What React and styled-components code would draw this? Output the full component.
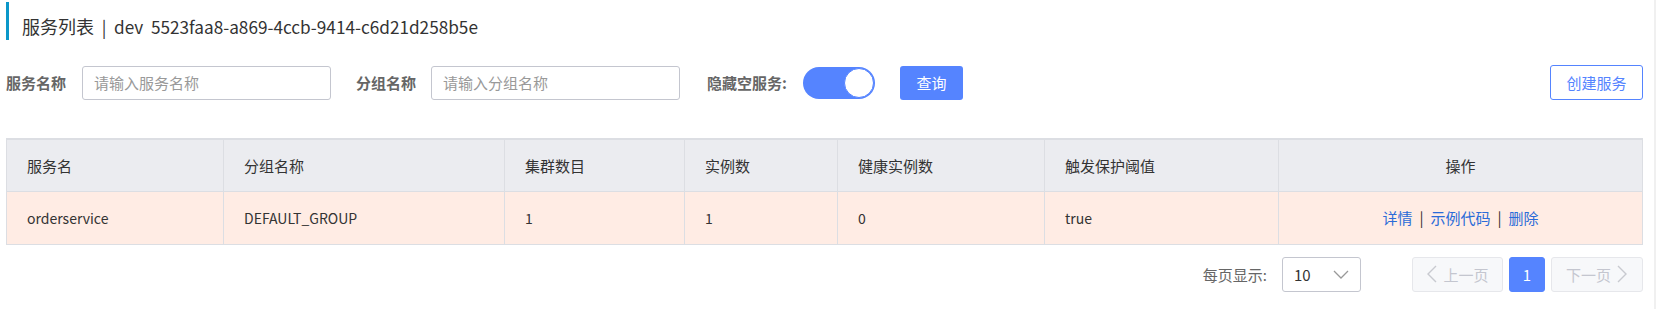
import styled, { createGlobalStyle } from 'styled-components';

const GlobalStyle = createGlobalStyle`
  html, body {
    margin: 0;
    padding: 0;
    background: #fff;
  }
  body {
    font-family: "Noto Sans CJK SC", "Liberation Sans", sans-serif;
    color: #333;
  }
  * {
    box-sizing: border-box;
  }
`;

const columns = [
  { title: '服务名', width: 217 },
  { title: '分组名称', width: 281 },
  { title: '集群数目', width: 180 },
  { title: '实例数', width: 153 },
  { title: '健康实例数', width: 207 },
  { title: '触发保护阈值', width: 234 },
  { title: '操作', width: 364, center: true },
];

const rows = [
  {
    name: 'orderservice',
    group: 'DEFAULT_GROUP',
    clusters: 1,
    instances: 1,
    healthy: 0,
    threshold: 'true',
  },
];

function ChevronDown() {
  return (
    <svg width="16" height="9" viewBox="0 0 16 9">
      <polyline points="1,1 8,8 15,1" fill="none" stroke="#999" strokeWidth="1.3" />
    </svg>
  );
}

function Chevron({ dir }) {
  const pts = dir === 'left' ? '10,1 2,9 10,17' : '1,1 9,9 1,17';
  return (
    <svg width="11" height="18" viewBox="0 0 11 18">
      <polyline points={pts} fill="none" stroke="#c8cad0" strokeWidth="1.4" />
    </svg>
  );
}

export default function App() {
  return (
    <>
      <GlobalStyle />
      <PageStyle>
        <MainStyle>
          <TitleStyle>
            <span className="cn">服务列表</span>&nbsp;&nbsp;|&nbsp;&nbsp;dev&nbsp;&nbsp;5523faa8-a869-4ccb-9414-c6d21d258b5e
          </TitleStyle>

          <FilterRowStyle>
            <LabelStyle $gap={16}>服务名称</LabelStyle>
            <InputStyle type="text" placeholder="请输入服务名称" />
            <LabelStyle $gap={15} $left={25}>分组名称</LabelStyle>
            <InputStyle type="text" placeholder="请输入分组名称" />
            <LabelStyle $gap={16} $left={27}>隐藏空服务:</LabelStyle>
            <ToggleStyle>
              <span className="knob" />
            </ToggleStyle>
            <PrimaryButton>查询</PrimaryButton>
            <OutlineButton>创建服务</OutlineButton>
          </FilterRowStyle>

          <TableStyle>
            <colgroup>
              {columns.map((col) => (
                <col key={col.title} style={{ width: col.width }} />
              ))}
            </colgroup>
            <thead>
              <tr>
                {columns.map((col) => (
                  <HeadCell key={col.title} $center={col.center}>
                    {col.title}
                  </HeadCell>
                ))}
              </tr>
            </thead>
            <tbody>
              {rows.map((item) => (
                <tr key={item.name}>
                  <BodyCell>{item.name}</BodyCell>
                  <BodyCell>{item.group}</BodyCell>
                  <BodyCell>{item.clusters}</BodyCell>
                  <BodyCell>{item.instances}</BodyCell>
                  <BodyCell>{item.healthy}</BodyCell>
                  <BodyCell>{item.threshold}</BodyCell>
                  <BodyCell $center>
                    <LinkStyle>详情</LinkStyle>
                    <span className="sep">|</span>
                    <LinkStyle>示例代码</LinkStyle>
                    <span className="sep">|</span>
                    <LinkStyle>删除</LinkStyle>
                  </BodyCell>
                </tr>
              ))}
            </tbody>
          </TableStyle>

          <PagerStyle>
            <span className="size-label">每页显示:</span>
            <SelectStyle>
              <span>10</span>
              <ChevronDown />
            </SelectStyle>
            <PageButton disabled $width={91}>
              <Chevron dir="left" />
              上一页
            </PageButton>
            <PageButton $active $width={36}>1</PageButton>
            <PageButton disabled $width={92}>
              下一页
              <Chevron dir="right" />
            </PageButton>
          </PagerStyle>
        </MainStyle>
        <ScrollTrackStyle />
      </PageStyle>
    </>
  );
}

const PageStyle = styled.div`
  display: flex;
  width: 1656px;
  height: 309px;
  overflow: hidden;
`;

const MainStyle = styled.div`
  flex: 1;
  padding: 2px 11px 0 6px;
`;

const ScrollTrackStyle = styled.div`
  width: 3px;
  background-color: #f0f0f0;
`;

const TitleStyle = styled.div`
  height: 38px;
  padding: 11px 0 0 13px;
  line-height: 27px;
  border-left: 3px solid #0b97c9;
  font-size: 17.2px;
  color: #333;
  white-space: nowrap;

  .cn {
    font-size: 18px;
  }
`;

const FilterRowStyle = styled.div`
  display: flex;
  align-items: center;
  margin-top: 25px;
  height: 35px;
`;

const LabelStyle = styled.span`
  margin-left: ${(p) => p.$left || 0}px;
  margin-right: ${(p) => p.$gap}px;
  font-size: 15px;
  font-weight: bold;
  color: #666;
  white-space: nowrap;
`;

const InputStyle = styled.input`
  width: 249px;
  height: 34px;
  padding: 0 11px;
  border: 1px solid #c4c6cf;
  border-radius: 3px;
  font-family: inherit;
  font-size: 15px;
  outline: none;
  &::placeholder {
    color: #999;
  }
`;

const ToggleStyle = styled.span`
  display: flex;
  justify-content: flex-end;
  align-items: center;
  width: 72px;
  height: 32px;
  padding: 1px;
  border-radius: 16px;
  background-color: #5584ff;

  .knob {
    width: 30px;
    height: 30px;
    border-radius: 50%;
    background-color: #fff;
    border: 1px solid #5584ff;
  }
`;

const PrimaryButton = styled.button`
  width: 63px;
  height: 34px;
  margin-left: 25px;
  border: none;
  border-radius: 3px;
  background-color: #5584ff;
  color: #fff;
  font-family: inherit;
  font-size: 15px;
`;

const OutlineButton = styled.button`
  width: 93px;
  height: 35px;
  margin-left: auto;
  border: 1px solid #5584ff;
  border-radius: 3px;
  background-color: #fff;
  color: #5584ff;
  font-family: inherit;
  font-size: 15px;
`;

const TableStyle = styled.table`
  width: 1636px;
  margin-top: 38px;
  border-collapse: collapse;
  table-layout: fixed;
  border-top: 2px solid #dcdee3;
`;

const HeadCell = styled.th`
  height: 52px;
  padding: 0 20px;
  border: 1px solid #dcdee3;
  background-color: #ebecf0;
  font-size: 15px;
  font-weight: normal;
  color: #333;
  text-align: ${(p) => (p.$center ? 'center' : 'left')};
`;

const BodyCell = styled.td`
  height: 53px;
  padding: 0 20px;
  border: 1px solid #dcdee3;
  background-color: #ffece4;
  font-size: 14px;
  color: #333;
  text-align: ${(p) => (p.$center ? 'center' : 'left')};

  .sep {
    margin: 0 7px;
    font-size: 15px;
    color: #333;
  }
`;

const LinkStyle = styled.a`
  color: #2a6bd8;
  font-size: 15px;
  cursor: pointer;
`;

const PagerStyle = styled.div`
  display: flex;
  justify-content: flex-end;
  align-items: center;
  margin-top: 12px;
  height: 35px;

  .size-label {
    margin-right: 15px;
    font-size: 15px;
    color: #666;
  }
`;

const SelectStyle = styled.div`
  display: flex;
  justify-content: space-between;
  align-items: center;
  width: 79px;
  height: 35px;
  padding: 0 11px 0 11px;
  margin-right: 45px;
  border: 1px solid #c4c6cf;
  border-radius: 3px;
  font-size: 15px;
  color: #333;
`;

const PageButton = styled.button`
  display: flex;
  justify-content: center;
  align-items: center;
  gap: 6px;
  width: ${(p) => p.$width}px;
  height: 35px;
  margin-left: 6px;
  border: 1px solid ${(p) => (p.$active ? '#5584ff' : '#e6e7eb')};
  border-radius: 3px;
  background-color: ${(p) => (p.$active ? '#5584ff' : '#f7f8fa')};
  color: ${(p) => (p.$active ? '#fff' : '#c4c6cf')};
  font-family: inherit;
  font-size: 15px;
`;
